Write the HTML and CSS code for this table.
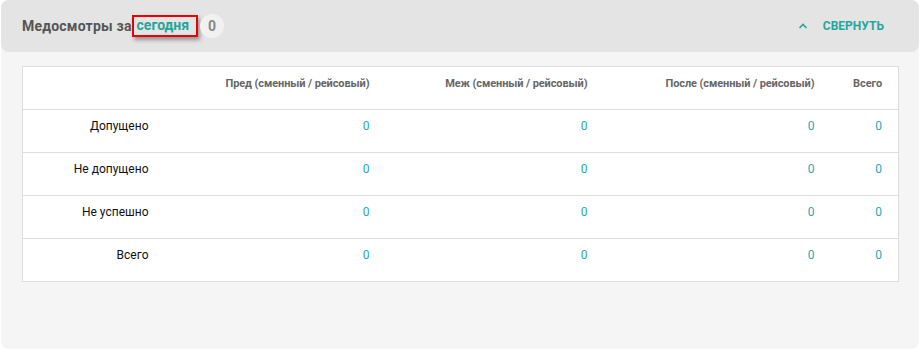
FILE: index.html
```html
<!DOCTYPE html>
<html lang="ru">

<head>
    <meta charset="utf-8">
    <title>Медосмотры</title>
    <link rel="stylesheet" href="styles.css">
</head>

<body>

    <div class="kort">
        <div class="hoved">
            <div class="titel">
                <span>Медосмотры за</span>
                <span class="periode">сегодня</span>
                <span class="antal">0</span>
            </div>
            <button class="luk">
                <svg width="10" height="8" viewBox="0 0 10 8">
                    <path d="M1.5 6 L5 2.5 L8.5 6" fill="none" stroke="#26a69a" stroke-width="1.6"/>
                </svg>
                Свернуть
            </button>
        </div>

        <table class="tabel">
            <thead>
                <tr>
                    <th class="k1"></th>
                    <th class="k2">Пред (сменный / рейсовый)</th>
                    <th class="k3">Меж (сменный / рейсовый)</th>
                    <th class="k4">После (сменный / рейсовый)</th>
                    <th class="k5">Всего</th>
                </tr>
            </thead>
            <tbody>
                <tr>
                    <td>Допущено</td>
                    <td class="tal">0</td>
                    <td class="tal">0</td>
                    <td class="tal">0</td>
                    <td class="tal">0</td>
                </tr>
                <tr>
                    <td>Не допущено</td>
                    <td class="tal">0</td>
                    <td class="tal">0</td>
                    <td class="tal">0</td>
                    <td class="tal">0</td>
                </tr>
                <tr>
                    <td>Не успешно</td>
                    <td class="tal">0</td>
                    <td class="tal">0</td>
                    <td class="tal">0</td>
                    <td class="tal">0</td>
                </tr>
                <tr>
                    <td>Всего</td>
                    <td class="tal">0</td>
                    <td class="tal">0</td>
                    <td class="tal">0</td>
                    <td class="tal">0</td>
                </tr>
            </tbody>
        </table>
    </div>

</body>

</html>
```

FILE: styles.css
```css
body {
    margin: 0;
    background-color: #fff;
    font-family: Roboto, 'Liberation Sans', sans-serif;
}

.kort {
    margin-left: 1px;
    width: 918px;
    height: 349px;
    background-color: #f5f5f5;
    border-radius: 8px;
    box-sizing: border-box;
}

.hoved {
    height: 52px;
    padding: 0 21px 0 21px;
    background-color: #e4e4e4;
    border-radius: 8px;
    display: flex;
    align-items: center;
    justify-content: space-between;
}

.titel {
    font-size: 14px;
    font-weight: bold;
    color: #555;
    display: flex;
    align-items: center;
}

.titel > span:first-child {
    letter-spacing: 0.2px;
}

.periode {
    color: #26a69a;
    border: 2px solid #e00;
    padding: 0 7px 1px 3px;
    line-height: 17px;
    box-shadow: 2px 3px 4px rgba(0, 0, 0, 0.35);
}

.antal {
    margin-left: 2px;
    width: 24px;
    height: 24px;
    border-radius: 50%;
    background-color: #f1f1f1;
    color: #888;
    font-size: 14px;
    display: flex;
    align-items: center;
    justify-content: center;
}

.luk {
    display: flex;
    align-items: center;
    gap: 15px;
    margin-right: 14px;
    padding: 0;
    background: none;
    border: none;
    font-family: Roboto, 'Liberation Sans', sans-serif;
    font-size: 12px;
    font-weight: bold;
    text-transform: uppercase;
    color: #26a69a;
}

.tabel {
    margin: 14px 0 0 21px;
    width: 876px;
    border-collapse: collapse;
    background-color: #fff;
    border: 1px solid #ddd;
    table-layout: fixed;
}

.tabel th,
.tabel td {
    height: 43px;
    padding: 9px 16px 0 16px;
    box-sizing: border-box;
    vertical-align: top;
    text-align: right;
    border-bottom: 1px solid #ddd;
}

.tabel th {
    font-size: 11px;
    font-weight: bold;
    color: #666;
    padding-top: 10px;
    letter-spacing: -0.1px;
}

.tabel td {
    font-size: 12px;
    color: #111;
}

.tabel td.tal {
    color: #29a7b4;
}

.k1 {
    width: 142px;
}

.k2 {
    width: 221px;
}

.k3 {
    width: 218px;
}

.k4 {
    width: 227px;
}

.k5 {
    width: 68px;
}
```
